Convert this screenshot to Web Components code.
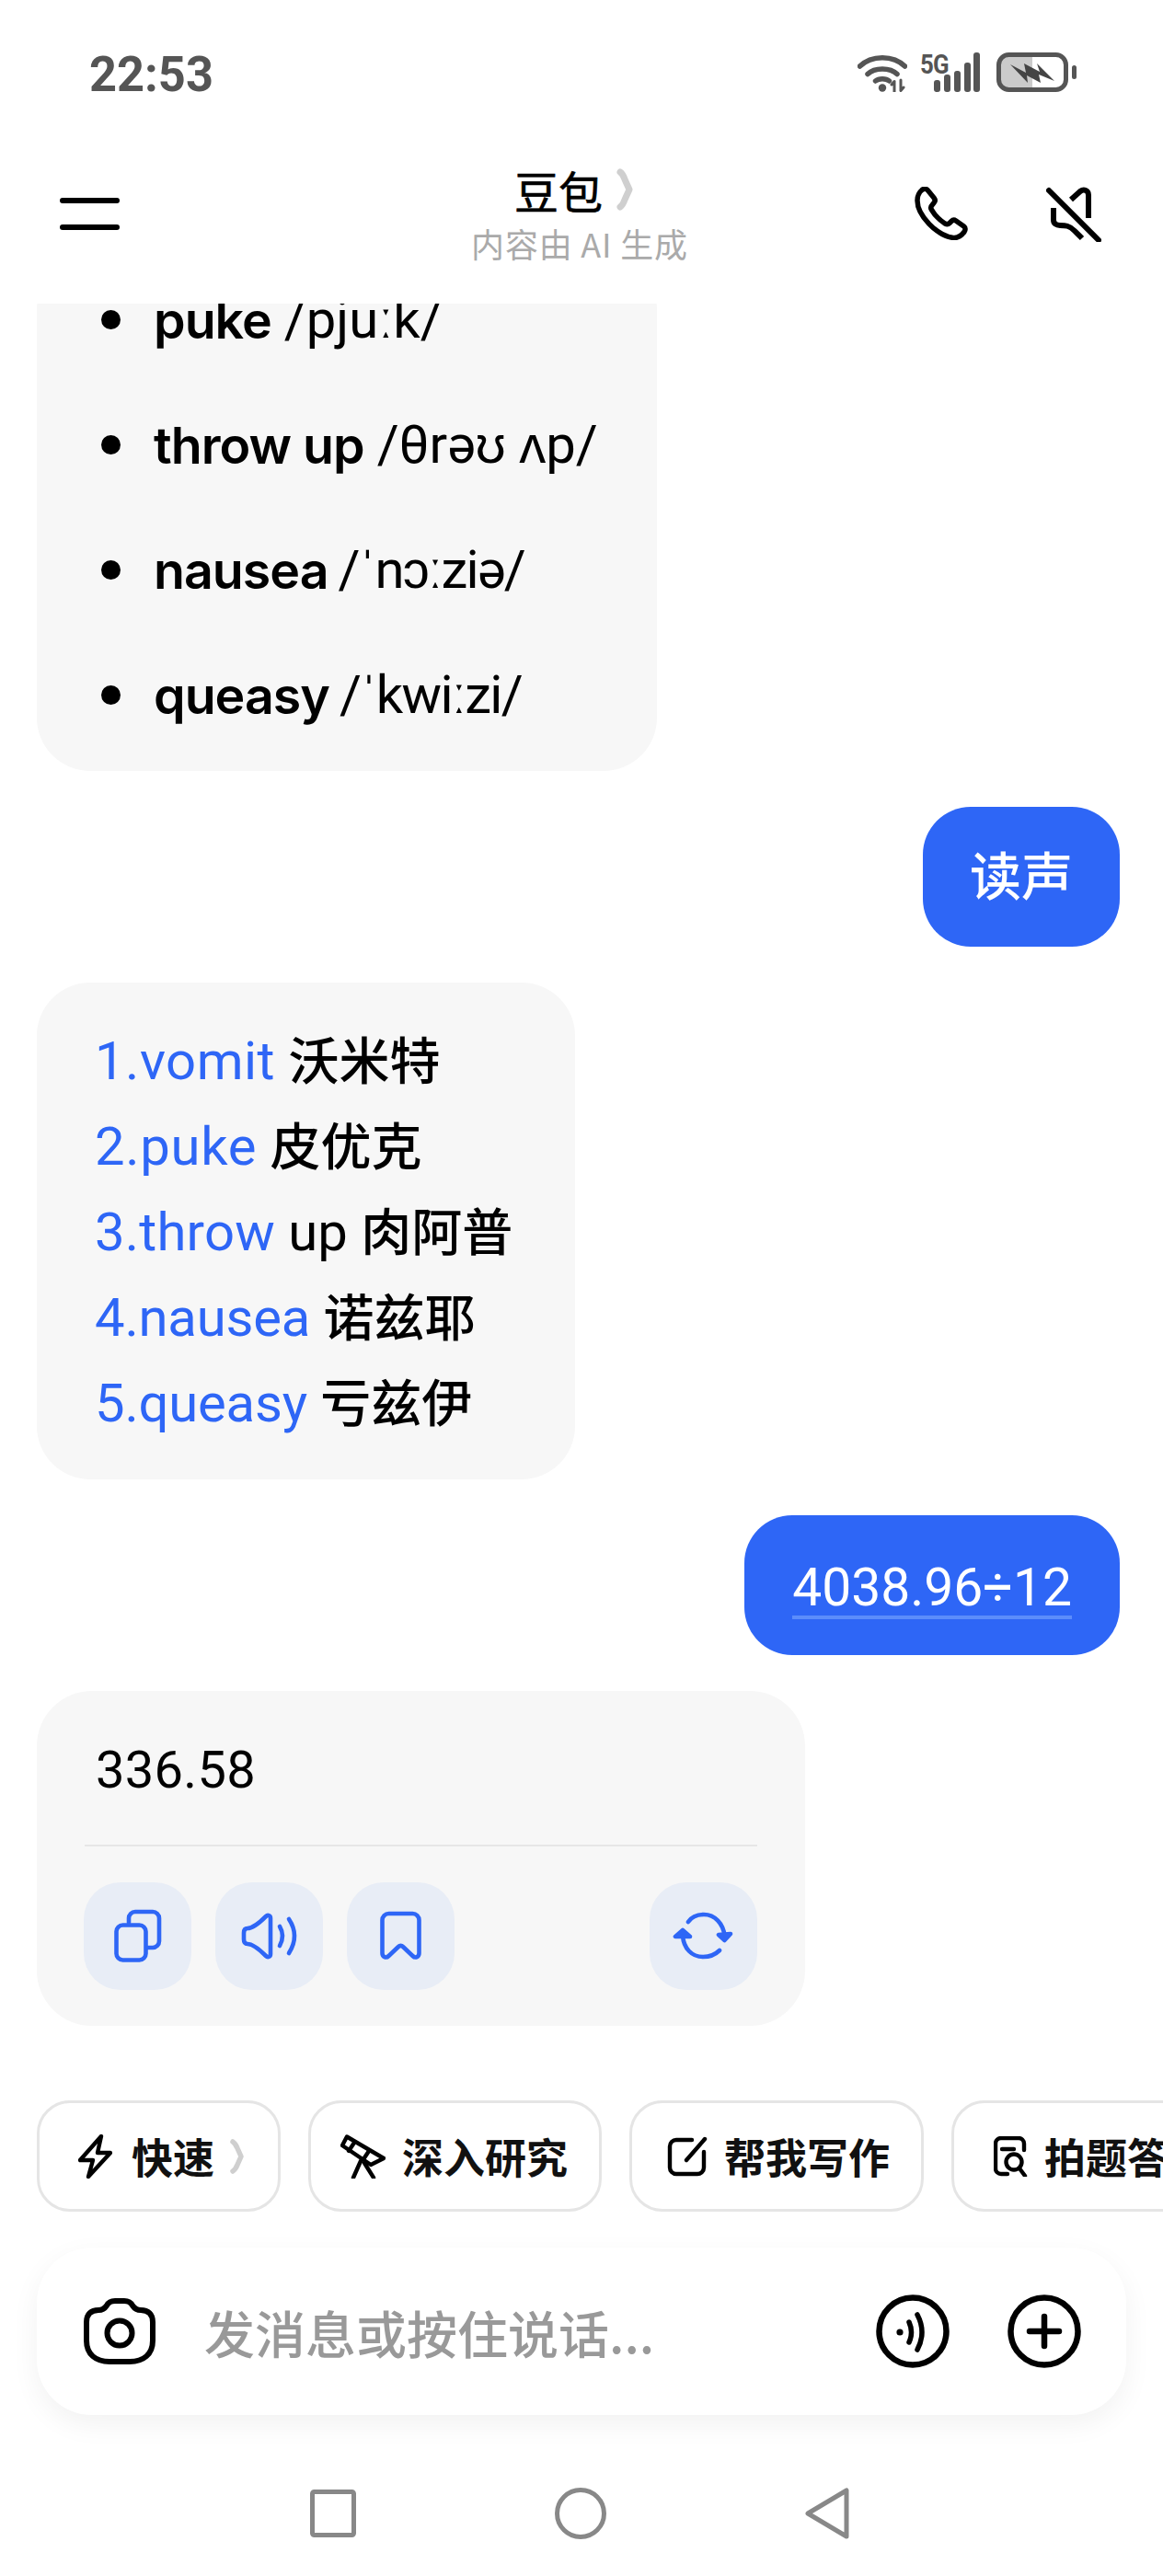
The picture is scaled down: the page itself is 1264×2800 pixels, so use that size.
<!DOCTYPE html>
<html lang="zh">
<head>
<meta charset="utf-8">
<title>豆包</title>
<style>
html,body{margin:0;padding:0;background:#fff}
body{font-family:Roboto,"Noto Sans CJK SC",sans-serif}
</style>
</head>
<body>
<app-shell>
  <status-bar slot="status"></status-bar>
  <chat-header slot="header"></chat-header>
  <chat-list slot="chat">
    <msg-card style="--w:674px;--pad:0 0 15px 0">
      <ipa-item word="puke" ipa="/pjuːk/"></ipa-item>
      <ipa-item word="throw up" ipa="/θrəʊ ʌp/"></ipa-item>
      <ipa-item word="nausea" ipa="/ˈnɔːziə/" tight></ipa-item>
      <ipa-item word="queasy" ipa="/ˈkwiːzi/" tight></ipa-item>
    </msg-card>
    <user-bubble>读声</user-bubble>
    <msg-card style="--w:585px;--pad:35px 0 40px 63px">
      <pron-line blue="1.vomit" cjk="沃米特" ls=".5"></pron-line>
      <pron-line blue="2.puke" cjk="皮优克" ls=".7"></pron-line>
      <pron-line blue="3.throw" latin="up" cjk="肉阿普" ls=".2"></pron-line>
      <pron-line blue="4.nausea" cjk="诺兹耶" ls="-.2"></pron-line>
      <pron-line blue="5.queasy" cjk="亏兹伊" ls="-.2"></pron-line>
    </msg-card>
    <user-bubble underline>4038.96÷12</user-bubble>
    <answer-card value="336.58"></answer-card>
  </chat-list>
  <chip-row slot="chips">
    <mode-chip icon="bolt" label="快速" more style="--cw:265px;--pl:42px"></mode-chip>
    <mode-chip icon="scope" label="深入研究" style="--cw:319px;--pl:32px"></mode-chip>
    <mode-chip icon="edit" label="帮我写作" style="--cw:320px;--pl:38px"></mode-chip>
    <mode-chip icon="doc" label="拍题答" style="--cw:320px;--pl:43px"></mode-chip>
  </chip-row>
  <input-bar slot="input"></input-bar>
  <nav-bar slot="nav"></nav-bar>
</app-shell>

<script>
const CJK = '"Noto Sans CJK SC"';
function def(name, html){
  customElements.define(name, class extends HTMLElement{
    connectedCallback(){
      if(this.shadowRoot) return;
      const r = this.attachShadow({mode:'open'});
      r.innerHTML = typeof html === 'function' ? html(this) : html;
    }
  });
}

def('app-shell', `<style>
:host{display:flex;flex-direction:column;width:1264px;height:2800px;overflow:hidden;background:#fff;color:#000;font-family:Roboto,${CJK},sans-serif}
</style>
<slot name="status"></slot><slot name="header"></slot><slot name="chat"></slot><slot name="chips"></slot><slot name="input"></slot><slot name="nav"></slot>`);

def('status-bar', `<style>
:host{display:flex;align-items:flex-start;height:130px;flex:none;box-sizing:border-box;padding:57px 0 0 97px;color:#555}
.time{font:700 54px/43px Roboto,sans-serif;letter-spacing:0;margin-top:2px;flex:1;}
.time span{display:inline-block;transform:scaleX(.97);transform-origin:left}
svg{display:block;flex:none}
.sig{position:relative;margin-left:14px;width:65px;height:43px}
.g{position:absolute;left:0;top:-2px;font:700 30px/30px Roboto,sans-serif;letter-spacing:-1px;transform:scaleX(.86);transform-origin:left}
.sig svg{position:absolute;left:15px;top:0}
.bat{margin-left:18px;margin-right:94px}
</style>
<div class="time"><span>22:53</span></div>
<svg width="54" height="43" viewBox="0 0 54 43" fill="none" stroke="#555" stroke-width="5.5" stroke-linecap="round">
<path d="M2.5 15 C15 2.5 39 2.5 51.5 15"/><path d="M11 23.5 C18.5 16 35.5 16 43 23.5"/><path d="M19.5 31 C23 28 31 28 34.5 31"/>
<circle cx="27" cy="38.5" r="4.2" fill="#555" stroke="none"/>
<path d="M40 43 V32 M37 35 L40 31.5 M47 30 V41 M50 38 L47 41.5" stroke-width="3"/>
</svg>
<div class="sig"><span class="g">5G</span>
<svg width="50" height="43" viewBox="0 0 50 43" fill="#555"><rect x="0" y="30" width="7" height="13" rx="3"/><rect x="11" y="24" width="7" height="19" rx="3"/><rect x="22" y="20" width="7" height="23" rx="3"/><rect x="33" y="11" width="7" height="32" rx="3"/><rect x="43" y="0" width="7" height="43" rx="3"/></svg></div>
<svg class="bat" width="87" height="43" viewBox="0 0 87 43" fill="none">
<path d="M2.5 14 a11 11 0 0 1 11-11 H39 V40 H13.5 a11 11 0 0 1-11-11 Z" fill="#cbcbcb"/>
<rect x="2.5" y="2.5" width="73" height="38" rx="11" stroke="#555" stroke-width="5"/>
<path d="M15 13 L32 22 L30 12 L47 21 L44 12 L63 31 L46 24 L48 33 L33 25 L34 33 Z" fill="#444"/>
<rect x="82" y="14" width="5" height="15" rx="2.5" fill="#555"/>
</svg>`);

def('chat-header', `<style>
:host{display:flex;height:200px;flex:none;box-sizing:border-box;padding-right:67px;position:relative}
.menu{width:65px;margin:85px 0 0 65px;flex:none}
.menu i{display:block;height:6px;border-radius:3px;background:#000;margin-bottom:23px}
.mid{flex:1;display:flex;flex-direction:column;align-items:center;padding:51px 0 0 136px}
.t{display:flex;align-items:center;height:50px;font:400 48px/50px ${CJK},sans-serif;color:#000;-webkit-text-stroke:.6px #000;margin-left:-12px}
.t svg{margin-left:14px}
.s{font:400 36px/40px ${CJK},sans-serif;color:#aaa;margin-top:13px;white-space:nowrap;letter-spacing:.8px}
.ico{display:flex;gap:85px;margin-top:73px;align-items:flex-start}
</style>
<div class="menu"><i></i><i></i></div>
<div class="mid"><div class="t">豆包<svg width="20" height="46" viewBox="0 0 20 46" fill="none"><path d="M5 4 Q8 6 10 12 L15 23 L10 34 Q8 40 5 42" stroke="#cfcfcf" stroke-width="7" stroke-linecap="round" stroke-linejoin="round"/></svg></div><div class="s">内容由 AI 生成</div></div>
<div class="ico">
<svg width="58" height="58" viewBox="0 0 58 58" fill="none" stroke="#000" stroke-width="5.5" stroke-linejoin="round"><path d="M8 3.5 C10.5 1.5 13 2 14.5 4 L21 12 C22.5 14 22.5 16 21 17.5 L19 20 C17.5 21.5 17.5 23.5 18.5 25 C22 31 27 36 33 40 C35 41 36.5 41 38 39.5 L40 37.5 C41.5 36 43.5 36 45 37 L53.5 43 C55.5 44.5 55.5 47 54 49 C51 53 47 56 42 55.5 C24 53 3 31 3 15 C3 10 5 6 8 3.5 Z"/></svg>
<svg width="60" height="60" viewBox="0 0 60 60" fill="none" stroke="#000" stroke-width="6" stroke-linecap="round" stroke-linejoin="round"><path d="M3 4 L57 58"/><path d="M27 14 L37 5 C41 2 46 4 46 9 V34" stroke-linecap="butt"/><path d="M8 23 V36 C8 40 11 42 15 42 C21 42 25 42 31 48 L39 56" stroke-linecap="butt"/></svg>
</div>`);

def('chat-list', `<style>
:host{display:flex;flex-direction:column;justify-content:flex-end;gap:39px;flex:1;min-height:0;overflow:hidden;box-sizing:border-box;padding:0 47px 81px 40px}
</style><slot></slot>`);

def('msg-card', `<style>
:host{display:block;flex:none;box-sizing:border-box;width:var(--w);padding:var(--pad);background:#f7f7f7;border-radius:58px}
</style><slot></slot>`);

def('ipa-item', el => `<style>
:host{display:flex;align-items:center;height:136px;box-sizing:border-box;padding-left:70px;position:relative;font-family:Inter,Roboto,sans-serif;font-size:55.5px;white-space:nowrap;letter-spacing:-1px}
i{width:21px;height:21px;border-radius:50%;background:#000;margin-right:36px;flex:none}
b{font-weight:600}
span{font-weight:400;font-family:Roboto,sans-serif;font-size:58px;letter-spacing:${el.hasAttribute('tight')?-1.7:0}px;margin-left:${el.hasAttribute('tight')?11:14}px}
</style><i></i><b>${el.getAttribute('word')}</b><span>${el.getAttribute('ipa')}</span>`);

def('pron-line', el => {
  const l = el.getAttribute('latin');
  return `<style>
:host{display:block;height:93px;font:400 58px/93px Roboto,sans-serif;white-space:nowrap;color:#000}
.b{color:#2e66f6;letter-spacing:${el.getAttribute('ls')||0}px}
.c{font:500 55px/93px ${CJK},sans-serif}
</style><span class="b">${el.getAttribute('blue')}</span> ${l?l+' ':''}<span class="c">${el.getAttribute('cjk')}</span>`;
});

def('user-bubble', el => {
  const u = el.hasAttribute('underline');
  return `<style>
:host{display:block;flex:none;align-self:flex-end;height:152px;box-sizing:border-box;padding:0 ${u?52:51}px;border-radius:52px;background:#2e66f6;color:#fff;font:${u?400:500} ${u?57:56}px/154px Roboto,${CJK},sans-serif;white-space:nowrap}
.u{display:block;margin:0;position:relative;top:49px;line-height:60px;border-bottom:4px solid #5c8dfb}
</style>${u?'<span class="u"><slot></slot></span>':'<slot></slot>'}`;
});

def('answer-card', el => `<style>
:host{display:block;flex:none;box-sizing:border-box;width:835px;height:364px;background:#f7f7f7;border-radius:60px;padding:0 52px 0 51px;font-family:Roboto,sans-serif}
.v{height:169px;font:400 56px/172px Roboto,sans-serif;padding-left:12px;letter-spacing:.3px;color:#000;border-bottom:2px solid #e6e6e6;box-sizing:border-box;margin-left:1px}
.row{display:flex;gap:26px;margin-top:39px}
.sp{flex:1}
</style><div class="v">${el.getAttribute('value')}</div>
<div class="row"><action-btn icon="copy"></action-btn><action-btn icon="speak"></action-btn><action-btn icon="mark"></action-btn><div class="sp"></div><action-btn icon="redo"></action-btn></div>`);

const ACT = {
copy:'<rect x="35.5" y="46.5" width="32" height="38" rx="7"/><path d="M49 44 V39 a7 7 0 0 1 7-7 H75 a7 7 0 0 1 7 7 V64 a7 7 0 0 1-7 7 H69"/>',
speak:'<path d="M35 50 C42 50 50 42 55 37 C57 35 60 36 60 39 V78 C60 81 57 82 55 80 C50 75 42 67 35 67 C32 67 31 65 31 62 V55 C31 52 32 50 35 50 Z"/><path d="M70 48 Q76 58 70 69"/><path d="M80 40 Q92 58 80 77"/>',
mark:'<path d="M38.5 41 a7 7 0 0 1 7-7 H71.5 a7 7 0 0 1 7 7 V77 c0 4-4 6-7 3 L61 70 c-1.5-1.5-3.5-1.5-5 0 L45.5 80 c-3 3-7 1-7-3 Z"/>',
redo:'<path d="M42 43 C46 37 52 35 59 35 C71 35 80 45 81.5 58"/><path d="M76 74 C72 78 65 81 58 81 C46 81 37 72 36 58"/><path d="M75 57 L88 56 L81.5 63 Z M28 59 L44 59 L36 52 Z" fill="#2e66f6"/>'
};
def('action-btn', el => `<style>
:host{display:block;width:117px;height:117px;flex:none;border-radius:40px;background:#e8edf6}
svg{display:block}
</style><svg width="117" height="117" viewBox="0 0 117 117" fill="none" stroke="#2e66f6" stroke-width="4.6" stroke-linecap="round" stroke-linejoin="round">${ACT[el.getAttribute('icon')]}</svg>`);

def('chip-row', `<style>
:host{display:flex;gap:30px;flex:none;height:121px;padding-left:40px;overflow:hidden;width:1264px;box-sizing:border-box}
</style><slot></slot>`);

const CHIP = {
bolt:[37,48,'<path d="M25 2 L2 28 H16 L11 46 L35 20 H21 Z"/>'],
scope:[49,48,'<path d="M7 2.5 L47 26 L33 33 L2 12 Z"/><path d="M15 9 L9 18 M31 18 L25 27"/><path d="M22 29 L14 47 M26 31 L36 47"/>'],
edit:[44,44,'<path d="M27 4 H10 a7 7 0 0 0-7 7 V34 a7 7 0 0 0 7 7 H33 a7 7 0 0 0 7-7 V17"/><path d="M41 3 L21 26"/>'],
doc:[37,44,'<path d="M15 41 H8 a6 6 0 0 1-6-6 V8 a6 6 0 0 1 6-6 H27 a6 6 0 0 1 6 6 V15"/><path d="M9 14 H22"/><circle cx="22" cy="28" r="8.5"/><path d="M28 35 L34 43"/>']
};
def('mode-chip', el => {
  const [w,h,p] = CHIP[el.getAttribute('icon')];
  const more = el.hasAttribute('more');
  return `<style>
:host{display:flex;align-items:center;flex:none;box-sizing:border-box;width:var(--cw);height:121px;border:3px solid #e5e5e5;border-radius:36px;padding:0 0 0 var(--pl);font:700 45px/60px ${CJK},sans-serif;color:#111;white-space:nowrap}
svg{display:block;flex:none;margin-right:${more?21:18}px}
.m{margin:0 0 0 17px}
</style><svg width="${w}" height="${h}" viewBox="0 0 ${w} ${h}" fill="none" stroke="#000" stroke-width="4.4" stroke-linecap="round" stroke-linejoin="round">${p}</svg>${el.getAttribute('label')}${more?'<svg class="m" width="16" height="38" viewBox="0 0 16 38" fill="none"><path d="M3 3 Q6 5 8 10 L12 19 L8 28 Q6 33 3 35" stroke="#cfcfcf" stroke-width="5.5" stroke-linecap="round" stroke-linejoin="round"/></svg>':''}`;
});

def('input-bar', `<style>
:host{display:flex;align-items:center;flex:none;box-sizing:border-box;width:1184px;height:182px;margin:39px 0 0 40px;border-radius:60px;background:#fff;box-shadow:0 10px 30px rgba(0,0,0,.055);padding:0 49px 0 51px}
.p{flex:1;font:500 55px/70px ${CJK},sans-serif;color:#999;margin-left:53px;white-space:nowrap;letter-spacing:0}
svg{display:block;flex:none}
.v{margin-right:63px}
</style>
<svg width="78" height="72" viewBox="0 0 78 72" fill="none" stroke="#000" stroke-width="6"><path d="M3 26 C3 17 8 13 16 13 C21 13 23 11 25 8 C27 4 30 3 34 3 H44 C48 3 51 4 53 8 C55 11 57 13 62 13 C70 13 75 17 75 26 V46 C75 61 65 69 50 69 H28 C13 69 3 61 3 46 Z"/><circle cx="39" cy="38" r="13.5"/></svg>
<div class="p">发消息或按住说话...</div>
<svg class="v" width="80" height="80" viewBox="0 0 80 80" fill="none" stroke="#000" stroke-width="6.5" stroke-linecap="round"><circle cx="40" cy="40" r="36.5"/><circle cx="26" cy="41" r="3.6" fill="#000" stroke="none"/><path d="M36 30 Q41 41 36 52" stroke-width="5.5"/><path d="M45 22 Q55 41 45 60" stroke-width="5.5"/></svg>
<svg width="80" height="80" viewBox="0 0 80 80" fill="none" stroke="#000" stroke-width="6.5" stroke-linecap="round"><circle cx="40" cy="40" r="36.5"/><path d="M24 40 H56 M40 24 V56"/></svg>`);

def('nav-bar', `<style>
:host{display:flex;flex:none;height:175px;padding-left:337px;box-sizing:border-box;align-items:flex-start;padding-top:79px}
svg{display:block;flex:none}
</style>
<svg style="margin-top:2px" width="50" height="52" viewBox="0 0 50 52" fill="none" stroke="#888" stroke-width="5" stroke-linejoin="round"><rect x="2.5" y="2.5" width="45" height="47" rx="2"/></svg>
<svg style="margin-left:216px" width="56" height="56" viewBox="0 0 56 56" fill="none" stroke="#888" stroke-width="5"><circle cx="28" cy="28" r="25.5"/></svg>
<svg style="margin-left:216px" width="48" height="56" viewBox="0 0 48 56" fill="none" stroke="#888" stroke-width="5" stroke-linejoin="round"><path d="M45 3 V53 L3 28 Z"/></svg>`);
</script>
</body>
</html>
